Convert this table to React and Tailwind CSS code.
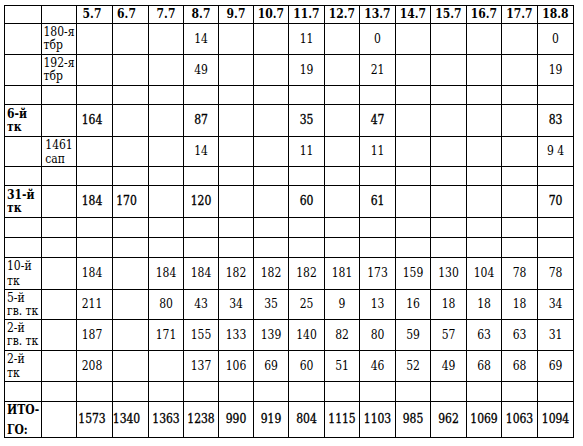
const heads = ['5.7', '6.7', '7.7', '8.7', '9.7', '10.7', '11.7', '12.7', '13.7', '14.7', '15.7', '16.7', '17.7', '18.8'];

const rows = [
  { sub: ['180-я', 'тбр'], lead: 'leading-[13px]', vals: ['', '', '', '14', '', '', '11', '', '0', '', '', '', '', '0'] },
  { sub: ['192-я', 'тбр'], lead: 'leading-[13px]', vals: ['', '', '', '49', '', '', '19', '', '21', '', '', '', '', '19'] },
  { vals: [] },
  { label: ['6-й', 'тк'], bold: true, lead: 'leading-[13px]', vals: ['164', '', '', '87', '', '', '35', '', '47', '', '', '', '', '83'] },
  { sub: ['1461', 'сап'], lead: 'leading-[14px]', vals: ['', '', '', '14', '', '', '11', '', '11', '', '', '', '', '9 4'] },
  { vals: [] },
  { label: ['31-й', 'тк'], bold: true, lead: 'leading-[13px]', vals: ['184', '170', '', '120', '', '', '60', '', '61', '', '', '', '', '70'] },
  { vals: [] },
  { vals: [] },
  { label: ['10-й', 'тк'], lead: 'leading-[15px]', vals: ['184', '', '184', '184', '182', '182', '182', '181', '173', '159', '130', '104', '78', '78'] },
  { label: ['5-й', 'гв. тк'], lead: 'leading-[13px]', vals: ['211', '', '80', '43', '34', '35', '25', '9', '13', '16', '18', '18', '18', '34'] },
  { label: ['2-й', 'гв. тк'], lead: 'leading-[13px]', vals: ['187', '', '171', '155', '133', '139', '140', '82', '80', '59', '57', '63', '63', '31'] },
  { label: ['2-й', 'тк'], lead: 'leading-[14px]', vals: ['208', '', '', '137', '106', '69', '60', '51', '46', '52', '49', '68', '68', '69'] },
  { vals: [] },
  { label: ['ИТО-', 'ГО:'], bold: true, lead: 'leading-[20px]', vals: ['1573', '1340', '1363', '1238', '990', '919', '804', '1115', '1103', '985', '962', '1069', '1063', '1094'] },
];

// small shift seen in the first two date columns
const shift = ['pr-[5px]', 'pr-[8px]', '', '', '', '', '', '', '', '', '', '', '', ''];

function Cell({ className = '', children }) {
  return (
    <div className={`flex items-center border-r border-b border-black ${className}`}>
      {children}
    </div>
  );
}

function Lines({ lines }) {
  if (!lines) return null;
  return (
    <div>
      {lines.map((l) => (
        <div key={l} className="whitespace-nowrap">{l}</div>
      ))}
    </div>
  );
}

function Row({ r }) {
  const vals = r.vals.length ? r.vals : Array(14).fill('');
  return (
    <>
      <Cell className={`justify-start pl-[2px] ${r.lead || ''} ${r.bold ? 'font-bold' : ''}`}>
        <Lines lines={r.label} />
      </Cell>
      <Cell className={`justify-center ${r.lead || ''}`}>
        <Lines lines={r.sub} />
      </Cell>
      {vals.map((v, i) => (
        <Cell key={i} className={`justify-center ${shift[i]} ${r.bold ? '[-webkit-text-stroke:0.3px_black]' : ''}`}>
          {v}
        </Cell>
      ))}
    </>
  );
}

export default function App() {
  return (
    <div
      className="min-h-screen bg-white text-black text-[12px] leading-[13px]"
      style={{ fontFamily: '"DejaVu Serif Condensed", "Liberation Serif", serif' }}
    >
      <div className="inline-grid ml-[4px] mt-[5px] border-l border-t border-black grid-cols-[37px_35px_36px_36px_35px_35px_35px_35px_36px_35px_36px_35px_36px_35px_36px_36px] grid-rows-[18px_31px_31px_19px_32px_30px_19px_32px_20px_20px_32px_30px_31px_31px_20px_36px]">
        <Cell />
        <Cell />
        {heads.map((h, i) => (
          <Cell key={h} className={`justify-center font-bold ${shift[i]}`}>{h}</Cell>
        ))}

        {rows.map((r, ri) => (
          <Row key={ri} r={r} />
        ))}
      </div>
    </div>
  );
}
